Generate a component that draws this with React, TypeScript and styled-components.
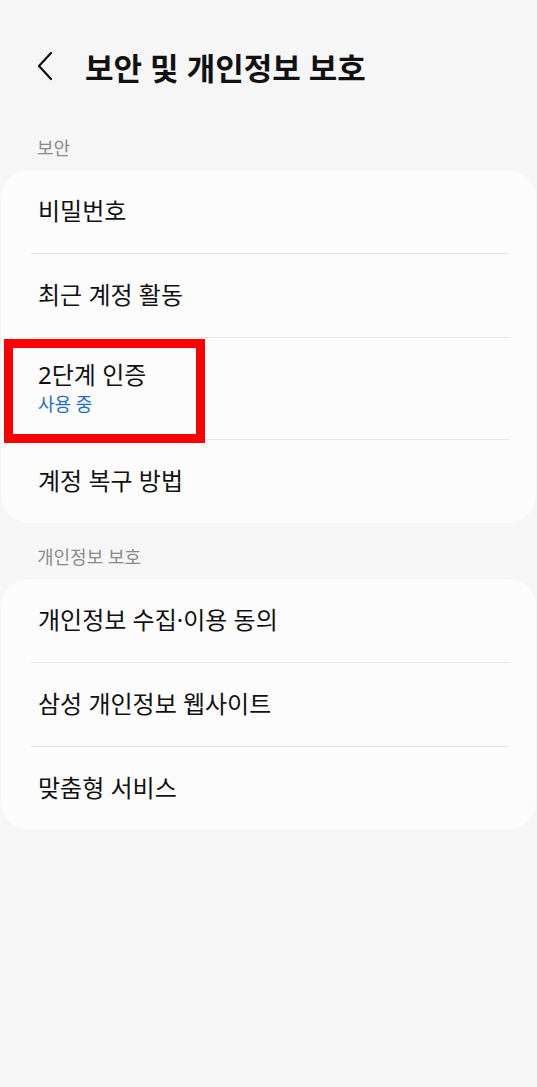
import styled, { createGlobalStyle } from 'styled-components'

const GlobalStyle = createGlobalStyle`
	html, body {
		margin: 0;
		padding: 0;
		background-color: #f6f6f6;
	}
	body {
		font-family: 'Noto Sans', 'Noto Sans CJK KR', sans-serif;
		color: #111;
	}
`

type Item = { title: string; sub?: string; marked?: boolean }

const securityItems: Item[] = [
	{ title: '비밀번호' },
	{ title: '최근 계정 활동' },
	{ title: '2단계 인증', sub: '사용 중', marked: true },
	{ title: '계정 복구 방법' },
]

const privacyItems: Item[] = [
	{ title: '개인정보 수집·이용 동의' },
	{ title: '삼성 개인정보 웹사이트' },
	{ title: '맞춤형 서비스' },
]

function BackIcon() {
	return (
		<svg width='18' height='30' viewBox='0 0 18 30' fill='none'>
			<polyline points='15,2 3,15 15,28' stroke='#111' strokeWidth='2.2' strokeLinecap='round' strokeLinejoin='round' />
		</svg>
	)
}

function Group({ items }: { items: Item[] }) {
	return (
		<Card>
			{items.map((item, i) => (
				<Row key={item.title} $first={i === 0} $double={!!item.sub}>
					<RowTitle>{item.title}</RowTitle>
					{item.sub && <RowSub>{item.sub}</RowSub>}
					{item.marked && <Highlight />}
				</Row>
			))}
		</Card>
	)
}

export default function App() {
	return (
		<Page>
			<GlobalStyle />
			<Header>
				<BackIcon />
				<Title>보안 및 개인정보 보호</Title>
			</Header>

			<SectionLabel $gap={53}>보안</SectionLabel>
			<Group items={securityItems} />

			<SectionLabel $gap={24}>개인정보 보호</SectionLabel>
			<Group items={privacyItems} />
		</Page>
	)
}

const Page = styled.div`
	width: 537px;
	min-height: 1087px;
	background-color: #f6f6f6;
`

const Header = styled.header`
	height: 38px;
	padding: 47px 0 0 36px;
	display: flex;
	align-items: center;
	gap: 31px;
`

const Title = styled.h1`
	margin: 0;
	font-size: 31px;
	font-weight: 700;
	color: #111;
`

const SectionLabel = styled.div<{ $gap: number }>`
	margin-top: ${(p) => p.$gap}px;
	margin-bottom: 12px;
	padding-left: 37px;
	font-size: 18px;
	line-height: 20px;
	color: #8a8a8a;
`

const Card = styled.div`
	margin: 0 1px;
	background-color: #fcfcfc;
	border-radius: 28px;
	overflow: hidden;
`

const Row = styled.div<{ $first: boolean; $double: boolean }>`
	position: relative;
	height: ${(p) => (p.$double ? 99 : 81)}px;
	margin: 0 27px 0 30px;
	padding: 0 0 2px 7px;
	display: flex;
	flex-direction: column;
	justify-content: center;
	border-top: ${(p) => (p.$first ? 'none' : '1px solid #e6e6e6')};
`

const RowTitle = styled.div`
	font-size: 24px;
	line-height: 30px;
	color: #111;
`

const RowSub = styled.div`
	font-size: 18px;
	line-height: 24px;
	margin-top: 2px;
	color: #1f6fc4;
`

const Highlight = styled.div`
	position: absolute;
	z-index: 1;
	left: -27px;
	top: 1px;
	width: 183px;
	height: 86px;
	border: 9px solid #ff0000;
	pointer-events: none;
`
